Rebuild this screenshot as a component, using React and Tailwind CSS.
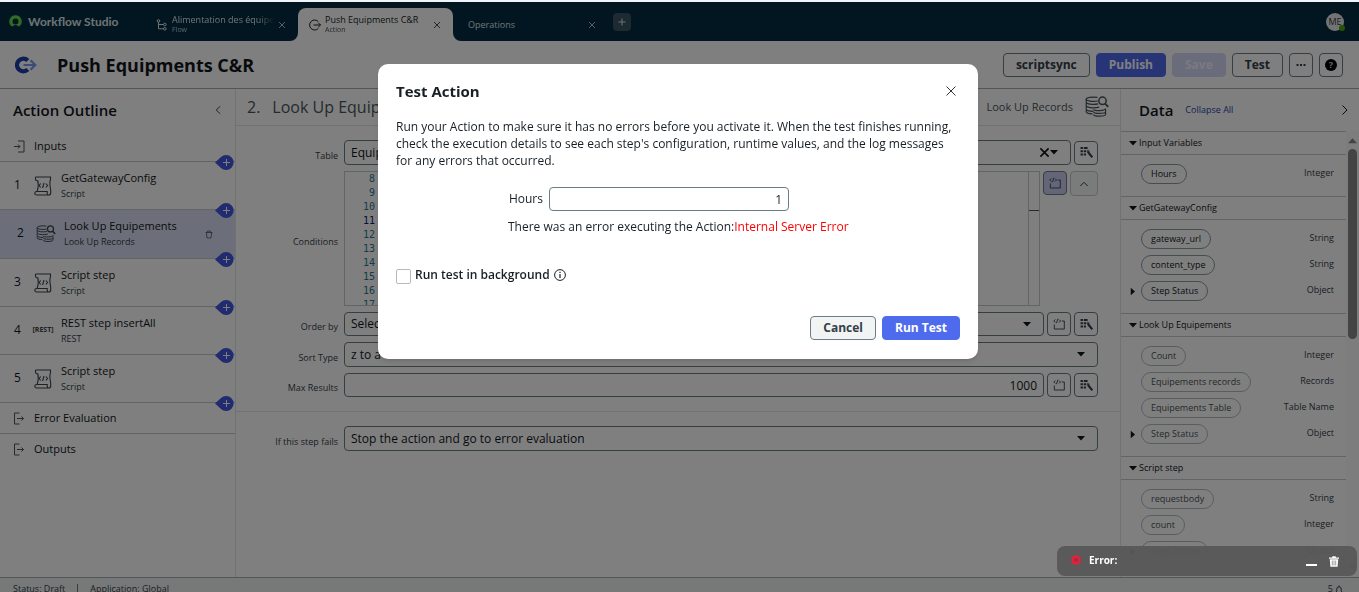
import { useState } from "react"
import { clsx } from "clsx"

const steps = [
  { number: 1, name: "GetGatewayConfig", type: "Script", icon: "script" },
  { number: 2, name: "Look Up Equipements", type: "Look Up Records", icon: "records" },
  { number: 3, name: "Script step", type: "Script", icon: "script" },
  { number: 4, name: "REST step insertAll", type: "REST", icon: "rest" },
  { number: 5, name: "Script step", type: "Script", icon: "script" }
]

const dataGroups = [
  {
    name: "Input Variables",
    enabled: true,
    items: [{ name: "Hours", type: "Integer" }]
  },
  {
    name: "GetGatewayConfig",
    enabled: true,
    items: [
      { name: "gateway_url", type: "String" },
      { name: "content_type", type: "String" },
      { name: "Step Status", type: "Object", expandable: true }
    ]
  },
  {
    name: "Look Up Equipements",
    enabled: false,
    items: [
      { name: "Count", type: "Integer" },
      { name: "Equipements records", type: "Records" },
      { name: "Equipements Table", type: "Table Name" },
      { name: "Step Status", type: "Object", expandable: true }
    ]
  },
  {
    name: "Script step",
    enabled: false,
    items: [
      { name: "requestbody", type: "String" },
      { name: "count", type: "Integer" },
      { name: "Step Status", type: "Object", expandable: true }
    ]
  }
]

const lineNumbers = [8, 9, 10, 11, 12, 13, 14, 15, 16, 17]

/* Icons */

const Svg = ({ className, viewBox = "0 0 16 16", children, ...rest }) => (
  <svg
    className={clsx("shrink-0", className)}
    viewBox={viewBox}
    fill="none"
    stroke="currentColor"
    strokeWidth="1"
    aria-hidden="true"
    {...rest}
  >
    {children}
  </svg>
)

const CloseIcon = ({ className, strokeWidth = 1.2 }) => (
  <Svg className={className} viewBox="0 0 12 12" strokeWidth={strokeWidth}>
    <path d="M1.5 1.5l9 9M10.5 1.5l-9 9" />
  </Svg>
)

const ChevronIcon = ({ className }) => (
  <Svg className={className} viewBox="0 0 12 12">
    <path d="M8.5 1.5L4 6l4.5 4.5" />
  </Svg>
)

const CaretIcon = ({ className }) => (
  <Svg className={className} viewBox="0 0 8 5" stroke="none">
    <path d="M0 0h8L4 4.5z" fill="currentColor" />
  </Svg>
)

const ScriptIcon = ({ className }) => (
  <Svg className={className} viewBox="0 0 18 20" strokeWidth="1.1">
    <path d="M1.500 1h15v2.500c-1.300 3-.4 7.500.2 10.500v3c0 1.200-.8 2-1.900 2H2.800c-2.700 0-2.700-3.500 0-3.500h10.400v1.700c0 1 .6 1.800 1.600 1.800" />
    <path d="M1.500 1v2.300c0 .9.600 1.400 1.500 1.400h.8c.9 3.500.4 7.300-.6 10.700" />
    <path d="M6.800 7.500L5 9.500l1.800 2M11.800 7.500l1.800 2-1.800 2M10 7l-1.400 5" />
  </Svg>
)

const RecordsIcon = ({ className }) => (
  <Svg className={className} viewBox="0 0 24 22" strokeWidth="1.2">
    <path d="M12.500 1.300C6.500.6 1.200 1.500 1.200 3.300c0 1.900 6.500 2.600 11.500 1.700" />
    <path d="M1.200 3.300v2.900c0 1.900 6.800 2.800 12 1.700M1.200 7v2.600c0 1.900 7.600 2.900 13 1.500M1.200 10.500v2.500c0 1.500 3.500 2.300 7.300 2.300M1.200 14v1.800c0 1.200 2.800 2 6.300 2.100" />
    <path d="M20.600 12.500c0 2.600-12.100 2.600-12.100 1M8.500 15.700c0 2.300 12.100 2.300 12.100 0v-2.200M8.500 18.400c0 2.300 12.100 2.300 12.100 0v-2.200" />
    <circle cx="17.500" cy="4.800" r="3.700" strokeWidth="1.5" />
    <path d="M20.200 7.600l3 3.300" strokeWidth="1.9" />
  </Svg>
)

const EnterIcon = ({ className }) => (
  <Svg className={className} viewBox="0 0 11 13">
    <path d="M4 1h6v11H4M0 6.500h6M4 4.500l2 2-2 2" />
  </Svg>
)

const ExitIcon = ({ className }) => (
  <Svg className={className} viewBox="0 0 11 13">
    <path d="M5.500 1h-5v11h5M3 6.500h6.500M7.500 4.500l2 2-2 2" />
  </Svg>
)

const TrashIcon = ({ className }) => (
  <Svg className={className} viewBox="0 0 10 11">
    <path d="M.8 3h8.400M3.200 2.800V1.200h3.600v1.600M1.700 3l.8 6.800h5l.8-6.800" />
  </Svg>
)

const ToggleScriptIcon = ({ className }) => (
  <Svg className={className} viewBox="0 0 12 12" strokeWidth=".9">
    <path d="M1.300 6.500v4.500h10V3H8.700" />
    <path d="M2.300 1.500L.8 3l1.500 1.500M6 1.500L7.500 3 6 4.500M4.900.8L3.400 5.200" />
  </Svg>
)

const PillPickerIcon = ({ className }) => (
  <Svg className={className} viewBox="0 0 12 12" stroke="none">
    <path
      d="M.5 1h2.200v1.700H.5zM3.500 1h3.500v1.700H3.500zM.5 4h2.200v1.700H.5zM3.500 4h2.200v1.700H3.500zM.5 7h2.200v1.700H.5zM3.500 7h2v1.700h-2z"
      fill="currentColor"
    />
    <path d="M7.300 5.500l4.100 5" stroke="currentColor" strokeWidth="2" />
    <path d="M6.300 4.800h2.600M7.300 3.500l.3 3" stroke="currentColor" strokeWidth=".8" />
  </Svg>
)

const ActionLogo = () => (
  <Svg className="w-[22px] h-[18px]" viewBox="0 0 22 18" strokeWidth="4.4">
    <path d="M12.800 4.500A6.300 6.300 0 1 0 12.800 13.500" stroke="#1f3da8" />
    <path d="M8.500 9h11.500M15.500 4.200L20.300 9l-4.800 4.800" stroke="#7c97f2" strokeWidth="2.2" />
  </Svg>
)

const StepIcon = ({ icon }) => {
  if (icon === "script") return <ScriptIcon className="w-[18px] h-5" />
  if (icon === "records") return <RecordsIcon className="w-5 h-[18px]" />
  return <span className="text-[7px] font-bold">[REST]</span>
}

/* Top navigation */

const Tab = ({ title, subtitle, icon, active, className }) => (
  <div
    className={clsx(
      "relative flex w-[155px] items-center pl-[11px] pr-2",
      active ? "mt-1.5 h-[33px] rounded-t-lg bg-white text-[#181f25]" : "h-full text-[#dfe6e9]",
      className
    )}
  >
    {active && (
      <>
        <svg className="absolute -left-2 bottom-0 size-2" viewBox="0 0 8 8" aria-hidden="true">
          <path d="M8 0v8H0a8 8 0 0 0 8-8z" fill="#fff" />
        </svg>
        <svg className="absolute -right-2 bottom-0 size-2" viewBox="0 0 8 8" aria-hidden="true">
          <path d="M0 0v8h8a8 8 0 0 1-8-8z" fill="#fff" />
        </svg>
      </>
    )}
    {icon}
    <a
      href="#tab"
      className={clsx(
        "min-w-0 flex-1 overflow-hidden whitespace-nowrap pl-1",
        !active && subtitle && "mask-r-from-85%"
      )}
    >
      <span className="block text-[9px] leading-[11px]">{title}</span>
      {subtitle && <span className="block text-[7px] leading-[10px] opacity-80">{subtitle}</span>}
    </a>
    <button type="button" aria-label="Close tab" className="p-1">
      <CloseIcon className="size-2" />
    </button>
  </div>
)

const TopNav = () => (
  <nav className="flex h-[39px] shrink-0 items-start bg-[#032d42] pr-[15px]">
    <div className="flex h-full w-[143px] items-center gap-1.5 pl-[9px]">
      <svg className="size-[13px]" viewBox="0 0 13 13" aria-hidden="true">
        <path
          d="M6.500.3a6.200 6.200 0 0 0-4.300 10.700c.5.500 1.200.5 1.700.1a4.200 4.200 0 0 1 5.200 0c.5.400 1.200.4 1.700-.1A6.200 6.200 0 0 0 6.500.3zm0 9.200a3 3 0 1 1 0-6 3 3 0 0 1 0 6z"
          fill="#62d84e"
        />
      </svg>
      <span className="whitespace-nowrap font-['Lato',sans-serif] text-xs font-bold text-[#dfe6e9]">
        Workflow Studio
      </span>
    </div>
    <Tab
      title="Alimentation des équipements"
      subtitle="Flow"
      className="pt-1.5"
      icon={
        <Svg className="ml-0.5 size-3 text-[#dfe6e9]" viewBox="0 0 12 12">
          <circle cx="2.500" cy="2" r="1.300" />
          <circle cx="8.800" cy="5.500" r="1.300" />
          <circle cx="8.800" cy="9.800" r="1.300" />
          <path d="M2.500 3.300v6.500h5M2.500 5.500h5" />
        </Svg>
      }
    />
    <Tab
      title="Push Equipments C&R"
      subtitle="Action"
      active
      icon={
        <Svg className="size-3" viewBox="0 0 12 12">
          <path d="M9.300 2.600A5 5 0 1 0 9.300 9.400M4.500 6H11.500M9.300 3.800L11.500 6 9.300 8.200" />
        </Svg>
      }
    />
    <Tab title="Operations" className="pt-1.5" />
    <button
      type="button"
      aria-label="New tab"
      className="mt-[11px] ml-[5px] flex size-[18px] items-center justify-center rounded bg-[#3b5563] text-[#dfe6e9]"
    >
      <Svg className="size-2" viewBox="0 0 8 8">
        <path d="M4 .5v7M.5 4h7" />
      </Svg>
    </button>
    <div className="relative mt-[11px] ml-auto flex size-[18px] items-center justify-center rounded-full bg-[#e4e6e7] text-[9px] text-[#33404a]">
      ME
      <span className="absolute -right-px bottom-0 size-1.5 rounded-full bg-[#4da80b]" />
    </div>
  </nav>
)

const HeaderButton = ({ className, children, ...rest }) => (
  <button
    type="button"
    className={clsx("flex h-6 items-center justify-center rounded border text-xs font-bold", className)}
    {...rest}
  >
    {children}
  </button>
)

const PageHeader = ({ onTest }) => (
  <header className="flex h-12 shrink-0 items-center border-b border-[#a4adb0] bg-white pl-[15px] pr-4">
    <ActionLogo />
    <h1 className="ml-5 flex-1 text-lg font-bold">Push Equipments C&amp;R</h1>
    <div className="flex gap-1.5 text-[#33404a]">
      <HeaderButton className="border-[#6b7c85] px-3">scriptsync</HeaderButton>
      <HeaderButton className="border-[#4f6bed] bg-[#4f6bed] px-3 text-white">Publish</HeaderButton>
      <HeaderButton className="border-[#d5d9f8] bg-[#d5d9f8] px-3 text-[#f3f4ff]" disabled>
        Save
      </HeaderButton>
      <HeaderButton className="border-[#6b7c85] px-3" onClick={onTest}>
        Test
      </HeaderButton>
      <HeaderButton className="w-6 border-[#6b7c85]" aria-label="More actions">
        <Svg className="w-2.5 h-1" viewBox="0 0 10 4" stroke="none">
          <path d="M.5 1h2v2h-2zM4 1h2v2H4zM7.500 1h2v2h-2z" fill="currentColor" />
        </Svg>
      </HeaderButton>
      <HeaderButton className="w-6 border-[#6b7c85]" aria-label="Help">
        <span className="flex size-3 items-center justify-center rounded-full bg-black text-[9px] text-[#c4c8ca]">
          ?
        </span>
      </HeaderButton>
    </div>
  </header>
)

/* Action outline */

const AddPin = () => (
  <button type="button" aria-label="Add step" className="absolute right-px -bottom-[9px] z-10">
    <svg className="h-[15px] w-[19px]" viewBox="0 0 19 15" aria-hidden="true">
      <path d="M0 7.500L6 2a7.500 7.500 0 1 1 0 11z" fill="#4258e0" />
      <path d="M11.500 4v7M8 7.500h7" stroke="#fff" />
    </svg>
  </button>
)

const OutlineRow = ({ icon, label, pin, last }) => (
  <div
    className={clsx(
      "relative flex h-[31px] items-center gap-[9px] pl-3.5 text-[11px]",
      !last && "border-b border-[#c4c8ca]"
    )}
  >
    <span className="text-[#4a545b]">{icon}</span>
    <span>{label}</span>
    {pin && <AddPin />}
  </div>
)

const ActionOutline = ({ selected, onSelect }) => (
  <aside className="w-[236px] shrink-0 border-r border-[#e3e6e7]">
    <div className="flex h-[42px] items-center justify-between pl-[13px] pr-3">
      <h2 className="text-[15px] font-semibold">Action Outline</h2>
      <button type="button" aria-label="Collapse outline">
        <ChevronIcon className="size-2.5" />
      </button>
    </div>
    <OutlineRow icon={<EnterIcon className="h-[13px] w-[11px]" />} label="Inputs" pin />
    <ol>
      {steps.map((step) => {
        const isSelected = step.number === selected
        return (
          <li
            key={step.number}
            onClick={() => onSelect(step.number)}
            className={clsx(
              "relative flex items-center border-b border-[#c4c8ca] pr-[22px]",
              isSelected ? "h-[49px] bg-[#d9def2] pl-[17px]" : "h-12 pl-3.5"
            )}
          >
            <span className="w-5 pb-0.5 text-xs">{step.number}</span>
            <span className="flex w-[18px] justify-center text-[#3c454b]">
              <StepIcon icon={step.icon} />
            </span>
            <span className="flex-1 pl-[9px]">
              <span className="block text-[11px] leading-4">{step.name}</span>
              <span className="block text-[9px] leading-4 text-[#33404a]">{step.type}</span>
            </span>
            {isSelected && (
              <button type="button" aria-label="Delete step" className="text-[#4a545b]">
                <TrashIcon className="h-[9px] w-2" />
              </button>
            )}
            <AddPin />
          </li>
        )
      })}
    </ol>
    <OutlineRow icon={<ExitIcon className="h-[13px] w-[11px]" />} label="Error Evaluation" />
    <OutlineRow icon={<ExitIcon className="h-[13px] w-[11px]" />} label="Outputs" last />
  </aside>
)

/* Step form */

const IconButton = ({ label, active, children }) => (
  <button
    type="button"
    aria-label={label}
    className={clsx(
      "flex size-6 shrink-0 items-center justify-center rounded border border-[#6b7c85] text-[#33404a]",
      active && "bg-[#c9cdf0]"
    )}
  >
    {children}
  </button>
)

const FieldRow = ({ label, htmlFor, children }) => (
  <div className="flex items-center gap-[3px]">
    <label htmlFor={htmlFor} className="w-[105px] shrink-0 pt-1.5 pr-[3px] text-right text-[9px] text-[#33404a]">
      {label}
    </label>
    {children}
  </div>
)

const Select = ({ id, value, clearable, className = "h-[25px]" }) => (
  <div className="relative min-w-0 flex-1">
    <select
      id={id}
      defaultValue={value}
      className={clsx(
        "block w-full appearance-none rounded border border-[#6b7c85] bg-white px-1.5 text-xs",
        className
      )}
    >
      <option>{value}</option>
    </select>
    {clearable && (
      <button type="button" aria-label="Clear" className="absolute top-[7px] right-[21px]">
        <CloseIcon className="size-[11px]" strokeWidth={1.8} />
      </button>
    )}
    <CaretIcon className="pointer-events-none absolute top-2.5 right-[13px] h-[5px] w-2" />
  </div>
)

const ScriptButtons = () => (
  <>
    <IconButton label="Toggle scripting">
      <ToggleScriptIcon className="size-3" />
    </IconButton>
    <IconButton label="Pick data pill">
      <PillPickerIcon className="size-[13px]" />
    </IconButton>
  </>
)

const StepForm = () => (
  <main className="min-w-0 flex-1">
    <div className="flex h-[37px] items-center border-b border-[#e3e6e7] pl-[11px] pr-[11px] text-[#4a545b]">
      <h2 className="flex flex-1 gap-3 text-base">
        <span>2.</span>
        <span>Look Up Equipements</span>
      </h2>
      <span className="mr-3 text-[11px]">Look Up Records</span>
      <RecordsIcon className="h-[22px] w-6" />
    </div>
    <form className="flex flex-col gap-1.5 border-b border-[#e3e6e7] pt-3.5 pr-[22px] pb-3.5">
      <FieldRow label="Table" htmlFor="table">
        <Select id="table" value="Equipements" clearable />
        <IconButton label="Pick data pill">
          <PillPickerIcon className="size-[13px]" />
        </IconButton>
      </FieldRow>
      <FieldRow label="Conditions">
        <div className="flex h-[135px] flex-1 overflow-hidden border border-[#c4c8ca]">
          <div className="w-[30px] text-right font-['DejaVu_Sans_Mono',monospace] text-[10px] leading-[14px] text-[#237893]">
            {lineNumbers.map((line) => (
              <div key={line} className={clsx(line === 11 && "text-[#0b216f]")}>
                {line}
              </div>
            ))}
          </div>
          <div className="flex-1" />
          <div className="w-[11px] border-l border-[#c4c8ca]">
            <div className="mt-[38px] h-px bg-[#555]" />
          </div>
        </div>
        <div className="flex gap-[3px] self-start">
          <IconButton label="Toggle scripting" active>
            <ToggleScriptIcon className="size-3" />
          </IconButton>
          <button
            type="button"
            aria-label="Collapse script"
            className="flex h-[25px] w-7 items-center justify-center rounded-sm border border-[#c4c8ca] bg-[#f5f6f6]"
          >
            <ChevronIcon className="size-2.5 rotate-90" />
          </button>
        </div>
      </FieldRow>
      <FieldRow label="Order by" htmlFor="order-by">
        <Select id="order-by" value="Select a field" className="h-6" />
        <ScriptButtons />
      </FieldRow>
      <FieldRow label="Sort Type" htmlFor="sort-type">
        <Select id="sort-type" value="z to a" />
      </FieldRow>
      <FieldRow label="Max Results" htmlFor="max-results">
        <input
          id="max-results"
          defaultValue="1000"
          className="h-6 min-w-0 flex-1 rounded border border-[#6b7c85] px-1.5 text-right text-xs"
        />
        <ScriptButtons />
      </FieldRow>
    </form>
    <div className="pt-3.5 pr-[22px]">
      <FieldRow label="If this step fails" htmlFor="on-fail">
        <Select id="on-fail" value="Stop the action and go to error evaluation" />
      </FieldRow>
    </div>
  </main>
)

/* Data panel */

const DataPanel = () => (
  <aside className="flex w-[239px] shrink-0 flex-col border-l border-[#e3e6e7]">
    <div className="flex h-[42px] shrink-0 items-center pl-[18px] pr-2">
      <h2 className="text-[15px] font-semibold">Data</h2>
      <button type="button" className="ml-3 text-[9px] text-[#2b3fa8]">
        Collapse All
      </button>
      <button type="button" aria-label="Hide data panel" className="ml-auto">
        <ChevronIcon className="size-3 rotate-180" />
      </button>
    </div>
    <div className="flex min-h-0 flex-1">
      <div className="min-w-0 flex-1 overflow-hidden">
        {dataGroups.map((group) => (
          <section key={group.name}>
            <h3 className="flex h-6 items-center border-y border-[#c4c8ca] pl-2 text-[9px]">
              <CaretIcon className="mr-0.5 h-[5px] w-2" />
              {group.name}
            </h3>
            <ul className="flex flex-col gap-1.5 pt-[9px] pb-3 pr-3 text-[9px]">
              {group.items.map((item) => (
                <li key={item.name} className="flex h-5 items-center">
                  <span className="flex w-5 justify-center pl-1">
                    {item.expandable && <CaretIcon className="h-[5px] w-2 -rotate-90" />}
                  </span>
                  <span
                    className={clsx(
                      "flex h-5 items-center rounded-full border px-[9px]",
                      group.enabled ? "border-[#8b9a9f]" : "border-[#b5bbbd] text-[#4a5255]"
                    )}
                  >
                    {item.name}
                  </span>
                  <span className="ml-auto pb-0.5 text-[#33404a]">{item.type}</span>
                </li>
              ))}
            </ul>
          </section>
        ))}
      </div>
      <div className="flex w-[13px] flex-col items-center justify-between bg-[#fafafa] py-1.5 text-[#888]">
        <CaretIcon className="h-[7px] w-[9px] rotate-180" />
        <div className="mt-[5px] mb-auto h-[190px] w-[9px] rounded-full bg-[#888]" />
        <CaretIcon className="h-[7px] w-[9px]" />
      </div>
    </div>
  </aside>
)

const Footer = () => (
  <footer className="flex h-[15px] shrink-0 items-start overflow-hidden border-t border-[#a4adb0] bg-[#eff3f2] pt-1 pl-[13px] pr-4 text-[9px] text-[#33404a]">
    <span>Status: Draft</span>
    <span className="mx-3 mt-0.5 h-4 w-px bg-[#6b7c85]" />
    <span>Application: Global</span>
    <span className="ml-auto flex items-center">
      5
      <Svg className="ml-0.5 size-2" viewBox="0 0 8 8">
        <path d="M1 7.500l.8-2V4a2.200 2.200 0 0 1 4.400 0v1.500l.8 2M4 .5v1.300" />
      </Svg>
    </span>
  </footer>
)

/* Test dialog */

const TestDialog = ({ onClose }) => (
  <div className="fixed inset-x-0 top-0.5 bottom-0 z-20 flex items-start justify-center bg-black/50 pt-[62px] pr-[3px]">
    <div
      role="dialog"
      aria-labelledby="test-title"
      className="w-full max-w-[600px] rounded-[10px] bg-white px-[18px] pt-4 pb-[19px] text-[#181f25] shadow-md"
    >
      <div className="flex h-[22px] items-center justify-between">
        <h2 id="test-title" className="text-[15px] font-bold">
          Test Action
        </h2>
        <button type="button" aria-label="Close" onClick={onClose} className="mr-[3px]">
          <CloseIcon className="size-3" strokeWidth={0.9} />
        </button>
      </div>
      <p className="mt-4 text-xs leading-[17px]">
        Run your Action to make sure it has no errors before you activate it. When the test finishes running,
        check the execution details to see each step's configuration, runtime values, and the log messages for
        any errors that occurred.
      </p>
      <div className="mt-[18px] flex items-center gap-1.5">
        <label htmlFor="hours" className="w-[147px] text-right text-xs">
          Hours
        </label>
        <input
          id="hours"
          defaultValue="1"
          className="h-6 w-60 rounded border border-[#6b7c85] px-1.5 text-right text-xs"
        />
      </div>
      <p className="mt-2 pl-28 text-xs leading-4">
        There was an error executing the Action:<span className="text-[#f00]">Internal Server Error</span>
      </p>
      <div className="mt-[30px] flex items-center gap-1">
        <input
          id="background"
          type="checkbox"
          className="mt-1 size-[15px] appearance-none rounded-xs border border-[#b5bbbd] checked:bg-[#4f6bed]"
        />
        <label htmlFor="background" className="text-xs font-semibold leading-4">
          Run test in background
        </label>
        <Svg className="size-3" viewBox="0 0 12 12">
          <circle cx="6" cy="6" r="5.400" />
          <path d="M6 5v4M6 2.800v1.200" strokeWidth="1.2" />
        </Svg>
      </div>
      <div className="mt-8 flex justify-end gap-1.5">
        <button
          type="button"
          onClick={onClose}
          className="h-6 rounded border border-[#6b7c85] bg-[#f2f4f4] px-3 text-xs font-bold text-[#33404a]"
        >
          Cancel
        </button>
        <button
          type="button"
          className="h-6 rounded border border-[#4f6bed] bg-[#4f6bed] px-3 text-xs font-bold text-white"
        >
          Run Test
        </button>
      </div>
    </div>
  </div>
)

const ErrorToast = () => (
  <div
    role="alert"
    className="fixed right-0.5 bottom-4 z-30 flex h-[30px] w-[300px] items-center rounded-lg bg-[#595959]/95 px-3.5 pb-0.5 text-white"
  >
    <svg className="size-2.5" viewBox="0 0 10 10" aria-hidden="true">
      <circle cx="5" cy="5" r="5" fill="#dc2440" />
      <path d="M3.200 3.200l3.600 3.600M6.800 3.200L3.200 6.800" stroke="#6b3040" strokeWidth=".8" />
    </svg>
    <span className="ml-2 flex-1 text-[10px] font-bold">Error:</span>
    <button type="button" aria-label="Minimize" className="mt-2.5 h-0.5 w-[11px] bg-white" />
    <button type="button" aria-label="Dismiss" className="mt-0.5 ml-3 mr-1">
      <svg className="h-[11px] w-2.5" viewBox="0 0 10 11" aria-hidden="true">
        <path d="M0 1.500h3L3.500.3h3L7 1.500h3v1.200H0zM.8 3.300h8.400l-.6 7.500H1.400z" fill="#fff" />
        <path d="M3.300 4.500v5M5 4.500v5M6.700 4.500v5" stroke="#777" strokeWidth=".7" />
      </svg>
    </button>
  </div>
)

const App = () => {
  const [selectedStep, setSelectedStep] = useState(2)
  const [isTestOpen, setIsTestOpen] = useState(true)

  return (
    <div className="flex h-screen flex-col overflow-hidden bg-white font-['Open_Sans',sans-serif] text-[#10161a]">
      <div className="h-0.5 shrink-0 bg-[#eef4f7]" />
      <TopNav />
      <PageHeader onTest={() => setIsTestOpen(true)} />
      <div className="flex min-h-0 flex-1">
        <ActionOutline selected={selectedStep} onSelect={setSelectedStep} />
        <StepForm />
        <DataPanel />
      </div>
      <Footer />
      {isTestOpen && <TestDialog onClose={() => setIsTestOpen(false)} />}
      <ErrorToast />
    </div>
  )
}

export default App
